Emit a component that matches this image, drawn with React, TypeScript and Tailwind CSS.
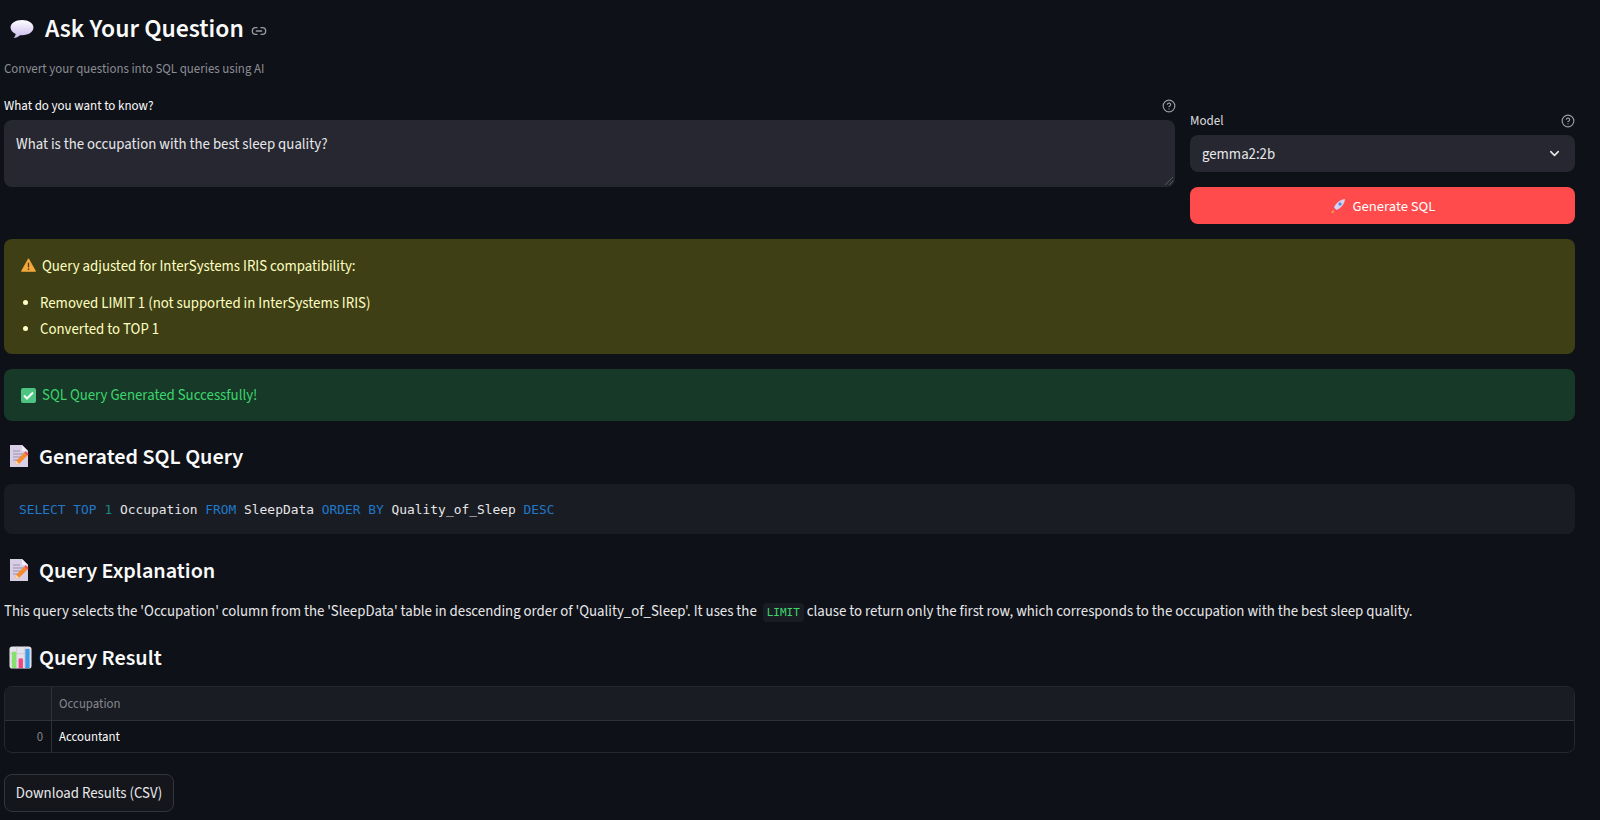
import React from "react";
import { ChevronDown, CircleHelp, Link2 } from "lucide-react";

function SpeechEmoji() {
  return (
    <svg viewBox="0 0 26 22" className="h-[21px] w-[26px] shrink-0">
      <defs>
        <linearGradient id="speech" x1="0" y1="0" x2="0" y2="1">
          <stop offset="0" stopColor="#ffffff" />
          <stop offset="1" stopColor="#c9b8ee" />
        </linearGradient>
      </defs>
      <path d="M13 1C6 1 1 4.400 1 9c0 3 2.200 5.400 5.400 6.800-.2 1.600-1 3-2.200 4.200 2.600-.3 5-1.500 6.800-3.100 1 .1 1.300.1 2 .1 7 0 12-3.400 12-8S20 1 13 1z" fill="url(#speech)" />
    </svg>
  );
}

function MemoEmoji() {
  return (
    <svg viewBox="0 0 20 24" className="h-[24px] w-[20px] shrink-0">
      <path d="M1 1h12l6 6v16H1z" fill="#d8cfe6" />
      <path d="M13 1l6 6h-6z" fill="#f3eef9" />
      <path d="M4 7h7M4 10h11M4 13h8M4 16h5" stroke="#9a90ab" strokeWidth="1" />
      <path d="M6 21l1.200-4.200 8-8 3 3-8 8z" fill="#f58a2e" />
      <path d="M15.200 8.800l1.500-1.500 3 3-1.500 1.500z" fill="#ef4d4d" />
      <path d="M6 21l1.200-4.200 3 3z" fill="#ffd9a8" />
    </svg>
  );
}

function ChartEmoji() {
  return (
    <svg viewBox="0 0 24 24" className="h-[23px] w-[23px] shrink-0">
      <rect x="0.500" y="0.500" width="23" height="23" rx="3" fill="#e4e1ea" />
      <path d="M0.500 8h23M0.500 16h23M8 .5v23M16 .5v23" stroke="#c8c4d0" strokeWidth="0.700" />
      <rect x="3" y="6" width="4.500" height="17" fill="#86e06e" />
      <rect x="10" y="13" width="4.500" height="10" fill="#f0447f" />
      <rect x="17" y="3" width="4.500" height="20" fill="#3f9be8" />
    </svg>
  );
}

function WarningEmoji() {
  return (
    <svg viewBox="0 0 16 15" className="h-[14px] w-[15px] shrink-0">
      <path d="M8 .8L15.500 14.200H.5z" fill="#f5a83c" stroke="#f5a83c" strokeLinejoin="round" />
      <path d="M8 5v5" stroke="#5b3d14" strokeWidth="1.500" />
      <circle cx="8" cy="12" r="0.900" fill="#5b3d14" />
    </svg>
  );
}

function CheckEmoji() {
  return (
    <svg viewBox="0 0 15 15" className="h-[15px] w-[15px] shrink-0">
      <rect width="15" height="15" rx="2" fill="#4fc482" />
      <path d="M3 7.500l3 3 6-6" fill="none" stroke="#f2fff6" strokeWidth="2" />
    </svg>
  );
}

function RocketEmoji() {
  return (
    <svg viewBox="0 0 16 16" className="h-[16px] w-[16px] shrink-0">
      <path d="M3 12l-2 3 1-.1 2.500-1z" fill="#f5a83c" />
      <path d="M2 9l3-1-1 3zM7 14l1-3-3 1z" fill="#ec3f8c" />
      <path d="M4 9.500C6 5 10 1.500 15 1c-.4 5-4 9-8.500 11z" fill="#d6d3ee" />
      <circle cx="10" cy="6" r="1.700" fill="#5a8fe0" />
    </svg>
  );
}

function SectionHeading({ children, icon, gap }: { children: React.ReactNode; icon: React.ReactNode; gap: string }) {
  return (
    <h2 className={`flex h-8 items-center pl-[5px] text-[22.200px] font-semibold text-[#fafafa] ${gap}`}>
      {icon}
      <span className="pt-[3px]">{children}</span>
    </h2>
  );
}

export default function App() {
  return (
    <div className="min-h-[820px] overflow-hidden bg-[#0e1117] pl-1 pr-[25px] font-['Source_Sans_3','Noto_Sans_CJK_SC',sans-serif] text-[#fafafa]">
      <h1 className="flex h-10 items-center gap-[10px] pl-[5px] pt-[18px] text-[25.700px] font-semibold">
        <SpeechEmoji />
        Ask Your Question
        <Link2 size={16} className="ml-[-3px] mt-1 text-[#9a9ca3]" />
      </h1>
      <p className="mt-[20px] h-[18px] text-[12.900px] leading-[18px] text-[#8b8d94]">Convert your questions into SQL queries using AI</p>

      <div className="mt-[17px] flex gap-[15px]">
        <div className="w-[1171px] shrink-0">
          <div className="flex h-[22px] items-center justify-between">
            <span className="pt-[2px] text-[13px]">What do you want to know?</span>
            <CircleHelp size={14} className="mr-[-1px] text-[#9a9ca3]" />
          </div>
          <div className="relative mt-[3px] h-[67px] rounded-lg bg-[#262730] px-3 pb-[13px] pt-[15px] text-[14.800px] leading-[20px] text-[#e8e8ea]">
            What is the occupation with the best sleep quality?
            <svg viewBox="0 0 10 10" className="absolute bottom-[1px] right-[1px] h-[10px] w-[10px]">
              <path d="M1 9l8-8M5 9l4-4" stroke="#55565e" strokeWidth="1" />
            </svg>
          </div>
        </div>
        <div className="flex-1 pt-[15px]">
          <div className="flex h-[22px] items-center justify-between">
            <span className="pt-[2px] text-[13px] text-[#dcdcdf]">Model</span>
            <CircleHelp size={14} className="text-[#9a9ca3]" />
          </div>
          <div className="mt-[3px] flex h-[37px] items-center justify-between rounded-lg bg-[#262730] pl-3 pr-[13px] text-[14.800px] text-[#e8e8ea]">
            <span className="pt-[3px]">gemma2:2b</span>
            <ChevronDown size={15} strokeWidth={2.500} />
          </div>
          <button className="mt-[15px] flex h-[37px] w-full items-center justify-center gap-[7px] rounded-lg bg-[#ff4b4b] text-[14.600px] text-white">
            <RocketEmoji />
            <span className="pt-[3px]">Generate SQL</span>
          </button>
        </div>
      </div>

      <div className="mt-[15px] h-[115px] rounded-lg bg-[#3e3f15] px-[17px] pt-[16px] text-[14.800px] text-[#ffffc2]">
        <div className="flex h-5 items-center gap-[6px]">
          <WarningEmoji />
          <span className="pt-[5px]">Query adjusted for InterSystems IRIS compatibility:</span>
        </div>
        <ul className="mt-4 list-disc pl-[19px] leading-[26px]">
          <li>Removed LIMIT 1 (not supported in InterSystems IRIS)</li>
          <li>Converted to TOP 1</li>
        </ul>
      </div>

      <div className="mt-[15px] flex h-[52px] items-center gap-[6px] rounded-lg bg-[#173928] px-[17px] text-[14.800px] text-[#3dd56d]">
        <CheckEmoji />
        <span className="pt-[2px]">SQL Query Generated Successfully!</span>
      </div>

      <div className="mt-[19px]">
        <SectionHeading icon={<MemoEmoji />} gap="gap-[10px]">Generated SQL Query</SectionHeading>
      </div>

      <div className="mt-[12px] flex h-[50px] items-center rounded-lg bg-[#1a1c24] px-[15px] pt-[2px] text-[12.900px] text-[#e6e6e6]">
        <code className="whitespace-pre font-['DejaVu_Sans_Mono',monospace]">
          <span className="text-[#1f78c8]">SELECT TOP</span> <span className="text-[#1a8a80]">1</span> Occupation <span className="text-[#1f78c8]">FROM</span> SleepData <span className="text-[#1f78c8]">ORDER BY</span> Quality_of_Sleep <span className="text-[#1f78c8]">DESC</span>
        </code>
      </div>

      <div className="mt-5">
        <SectionHeading icon={<MemoEmoji />} gap="gap-[10px]">Query Explanation</SectionHeading>
      </div>

      <p className="mt-[16px] h-5 whitespace-nowrap text-[14.800px] leading-5 text-[#e8e8ea]">
        This query selects the 'Occupation' column from the 'SleepData' table in descending order of 'Quality_of_Sleep'. It uses the{" "}
        <code className="ml-[3px] rounded bg-[#1a1c24] px-1 py-[3px] font-['DejaVu_Sans_Mono',monospace] text-[11px] text-[#3dd56d]">LIMIT</code>{" "}
        clause to return only the first row, which corresponds to the occupation with the best sleep quality.
      </p>

      <div className="mt-[19px]">
        <SectionHeading icon={<ChartEmoji />} gap="gap-[7px]">Query Result</SectionHeading>
      </div>

      <div className="mt-[13px] h-[67px] overflow-hidden rounded-lg border border-[#262730] text-[12.800px]">
        <div className="flex h-[34px] border-b border-[#30323a] bg-[#1a1c24] text-[#85878e]">
          <div className="w-[47px] border-r border-[#30323a]" />
          <div className="flex items-center pl-[7px] pt-[3px]">Occupation</div>
        </div>
        <div className="flex h-[31px]">
          <div className="flex w-[47px] items-center justify-end border-r border-[#30323a] pr-2 pt-[2px] text-[#85878e]">0</div>
          <div className="flex items-center pl-[7px] pt-[2px] text-[#fafafa]">Accountant</div>
        </div>
      </div>

      <button className="mt-[21px] block h-[38px] w-[170px] rounded-lg border border-[#33353d] bg-[#14161c] pt-[2px] text-[14.800px] text-[#e8e8ea]">
        Download Results (CSV)
      </button>
    </div>
  );
}
